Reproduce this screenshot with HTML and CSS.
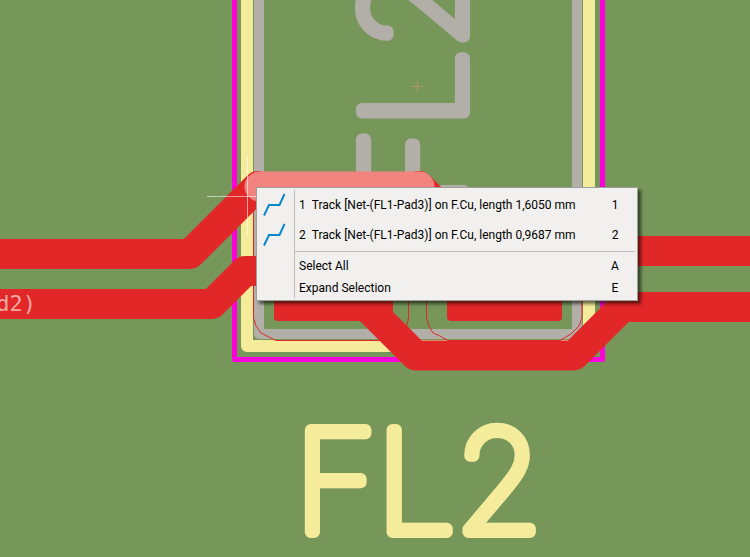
FILE: index.html
```
<!DOCTYPE html>
<html lang="en">
<head>
<meta charset="utf-8">
<title>PCB Editor</title>
<link rel="stylesheet" href="styles.css">
</head>
<body>
<main class="canvas">
  <svg class="board" viewBox="0 0 750 557" preserveAspectRatio="xMinYMin slice" aria-label="Board">
    <!-- courtyard, silkscreen and fabrication outlines -->
    <rect class="courtyard" x="234.5" y="-20" width="368" height="379.5"/>
    <rect class="silk" x="247" y="-20" width="342" height="366"/>
    <rect class="fab" x="259" y="-20" width="318" height="354"/>
    <text class="reference fab-text" transform="translate(464 210) rotate(-90)">FL2</text>
    <text class="reference silk-text" x="295" y="532">FL2</text>
    <path class="anchor" d="M412 86.5h11M417.500 81v11"/>
    <!-- pads with clearance outlines -->
    <rect class="pad" x="274" y="200" width="119" height="121" rx="4"/>
    <rect class="pad" x="447" y="200" width="115" height="121" rx="4"/>
    <path class="clearance" d="M253.500 200V318L256 326L261 333L267 336L276 340.500H386L400 335L407 325L408.500 318V200"/>
    <path class="clearance" d="M426.500 200V318L429 326L433 333L440 336L448 340.500H560L571 334L579 326L582 318V200"/>
    <!-- copper tracks -->
    <path class="track" d="M-20 254H190L258 186"/>
    <path class="track" d="M-20 304H212L245 271H330"/>
    <path class="track" d="M419 186L484 251H770"/>
    <path class="track" d="M340 280L415.500 355.500H574L622.500 307H770"/>
    <path class="track selected" d="M259.500 186.500H419.500"/>
    <text class="net" x="36" y="311">d2)</text>
    <path class="cursor" d="M207 196.500H287M247.500 156V236"/>
  </svg>

  <div class="menu" role="menu">
    <button class="item tall" role="menuitem">
      <svg class="icon" viewBox="0 0 24 24"><path d="M1 22.500L6 12H16.500L21.500 1"/></svg>
      <span class="label"><span>1</span><span>Track [Net-(FL1-Pad3)] on F.Cu, length 1,6050 mm</span></span><kbd>1</kbd>
    </button>
    <button class="item tall" role="menuitem">
      <svg class="icon" viewBox="0 0 24 24"><path d="M1 22.500L6 12H16.500L21.500 1"/></svg>
      <span class="label"><span>2</span><span>Track [Net-(FL1-Pad3)] on F.Cu, length 0,9687 mm</span></span><kbd>2</kbd>
    </button>
    <div class="separator" role="separator"></div>
    <button class="item" role="menuitem"><span class="icon"></span><span class="label">Select All</span><kbd>A</kbd></button>
    <button class="item" role="menuitem"><span class="icon"></span><span class="label">Expand Selection</span><kbd>E</kbd></button>
  </div>
</main>
</body>
</html>
```
FILE: styles.css
```
* { box-sizing: border-box; }
body { margin: 0; background: #76965a; }
.canvas { position: relative; height: 100vh; overflow: hidden; }
.board { display: block; width: 100%; height: 100%; }

.board rect, .board path { fill: none; }
.board .courtyard { stroke: #ff00dc; stroke-width: 5; stroke-linejoin: round; }
.board .silk { stroke: #f5ec9b; stroke-width: 12; stroke-linejoin: round; }
.board .fab { stroke: #b2aea8; stroke-width: 10; stroke-linejoin: round; }
.board .pad { fill: #e12727; }
.board .clearance { stroke: #e12727; stroke-width: 1; }
.board .track { stroke: #e12727; stroke-width: 30; stroke-linecap: round; stroke-linejoin: round; }
.board .selected { stroke: #f2847f; }
.board .anchor { stroke: #b49570; stroke-width: 1; }
.board .cursor { stroke: #ffffff; stroke-opacity: 0.55; stroke-width: 1; }

.reference {
  font-family: Inter, sans-serif;
  font-size: 140px;
  font-weight: 100;
  stroke-width: 12;
  stroke-linejoin: round;
  stroke-linecap: round;
}
.fab-text { fill: #b2aea8; stroke: #b2aea8; }
.silk-text { fill: #f5ec9b; stroke: #f5ec9b; }
.net {
  font-family: "DejaVu Sans Mono", monospace;
  font-size: 22px;
  fill: #f3a8a4;
  text-anchor: end;
}

.menu {
  position: absolute;
  left: 256px;
  top: 187px;
  min-width: 382px;
  padding: 2px;
  border: 1px solid #a09f9b;
  background: linear-gradient(#bfbeb8, #bfbeb8) 37px 2px / 1px calc(100% - 4px) no-repeat #f1f0ee;
  box-shadow: 3px 3px 3px rgba(0, 0, 0, 0.55);
  font-family: Roboto, sans-serif;
  font-size: 12px;
  line-height: 16px;
  color: #000;
}
.item {
  display: grid;
  grid-template-columns: 24px 1fr 24px;
  align-items: center;
  width: 100%;
  height: 22px;
  padding: 0 8px 0 4px;
  border: 0;
  background: none;
  color: inherit;
  font: inherit;
  text-align: left;
}
.tall { height: 30px; }
.icon { width: 24px; height: 24px; }
.icon path { fill: none; stroke: #0b87c9; stroke-width: 2; }
.label { display: flex; gap: 6px; padding: 0 20px 0 12px; white-space: nowrap; }
kbd { font: inherit; text-align: center; }
.separator { height: 1px; margin: 1px 0 2px 36px; background: #bfbeb8; }
```
